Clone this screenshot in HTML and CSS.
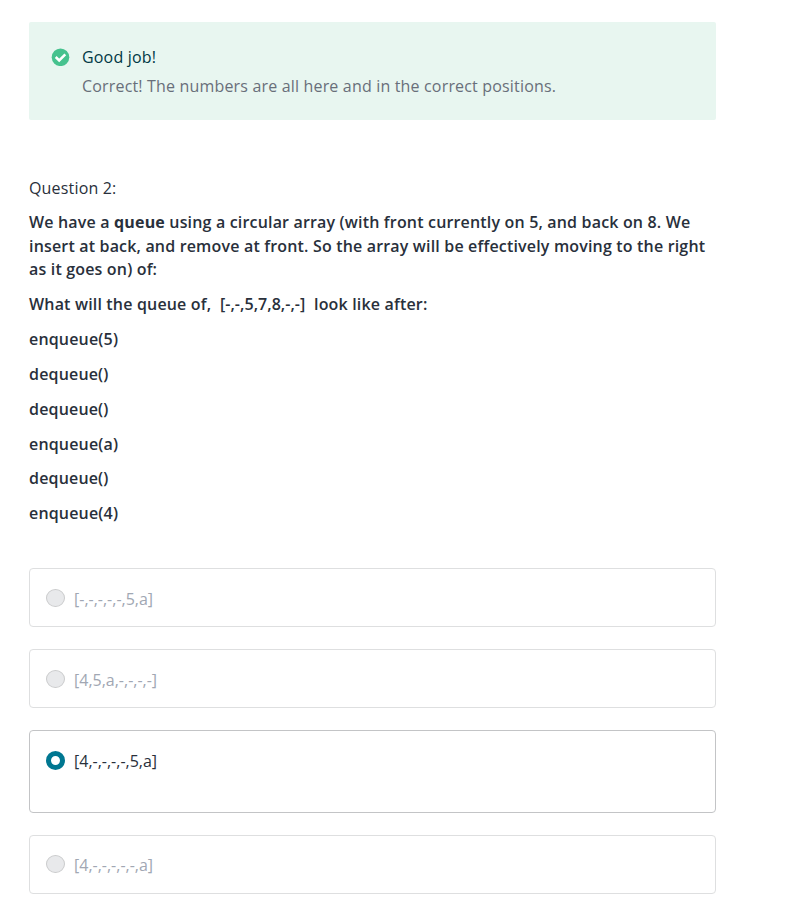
FILE: index.html
```html
<!DOCTYPE html>
<html lang="en">
<head>
<meta charset="utf-8">
<title>Quiz</title>
<link rel="stylesheet" href="styles.css">
</head>
<body>
<main class="quiz">
  <section class="feedback">
    <svg class="feedback-icon" width="19" height="18" viewBox="0 0 19 18"><circle cx="9.5" cy="9.3" r="8.8" fill="#46c28e"/><path d="M4.7 9l3.5 3.5 6.1-6.1" fill="none" stroke="#fff" stroke-width="2.5"/></svg>
    <div>
      <div class="feedback-title">Good job!</div>
      <div class="feedback-text">Correct! The numbers are all here and in the correct positions.</div>
    </div>
  </section>
  <div class="number">Question 2:</div>
  <div class="prompt">
    <p>We have a <strong>queue</strong> using a circular array (with front currently on 5, and back on 8. We insert at back, and remove at front. So the array will be effectively moving to the right as it goes on) of:</p>
    <p>What will the queue of,&nbsp; <span class="sequence">[-,-,5,7,8,-,-]</span>&nbsp; look like after:</p>
    <p>enqueue(5)</p>
    <p>dequeue()</p>
    <p>dequeue()</p>
    <p>enqueue(a)</p>
    <p>dequeue()</p>
    <p>enqueue(4)</p>
  </div>
  <ul class="answers">
    <li class="answer"><span class="radio"></span><span>[-,-,-,-,-,5,a]</span></li>
    <li class="answer"><span class="radio"></span><span>[4,5,a,-,-,-,-]</span></li>
    <li class="answer selected"><span class="radio"></span><span>[4,-,-,-,-,5,a]</span></li>
    <li class="answer"><span class="radio"></span><span>[4,-,-,-,-,-,a]</span></li>
  </ul>
</main>
</body>
</html>
```
FILE: styles.css
```css
* { box-sizing: border-box; }
body { margin: 0; background: #fff; color: #29303b; font: 16px/23.4px "Open Sans", sans-serif; letter-spacing: 0.172px; }
.quiz { width: 687px; margin: 22px 0 0 29px; }
.feedback { display: flex; height: 98px; padding: 24px 23px; border-radius: 2px; background: #e8f6f0; }
.feedback-icon { margin: 2px 12px 0 -1px; flex: none; }
.feedback-title { color: #003845; }
.feedback-text { margin-top: 6px; color: #686f7a; }
.number { margin-top: 57px; }
.prompt { margin-top: 11px; font-weight: 600; }
.prompt p { margin: 0 0 11.48px; }
.prompt strong { font-weight: 700; }
.sequence { letter-spacing: 0.05px; }
.answers { list-style: none; margin: 41.8px 0 0; padding: 0; letter-spacing: 0; }
.answer { display: flex; height: 59px; margin-bottom: 22px; padding: 19px 16px; border: 1px solid #dedfe0; border-radius: 4px; color: #a1a7b3; }
.answer:last-child { padding-top: 18px; }
.radio { flex: none; width: 19px; height: 18px; margin: 1px 9px 0 0; border: 1px solid #cacbcc; border-radius: 50%; background: #e8e9eb; }
.selected { height: 83px; border-color: #c3c4c6; color: #29303b; }
.selected .radio { height: 19px; border: 5px solid #007791; background: #fff; }
```
